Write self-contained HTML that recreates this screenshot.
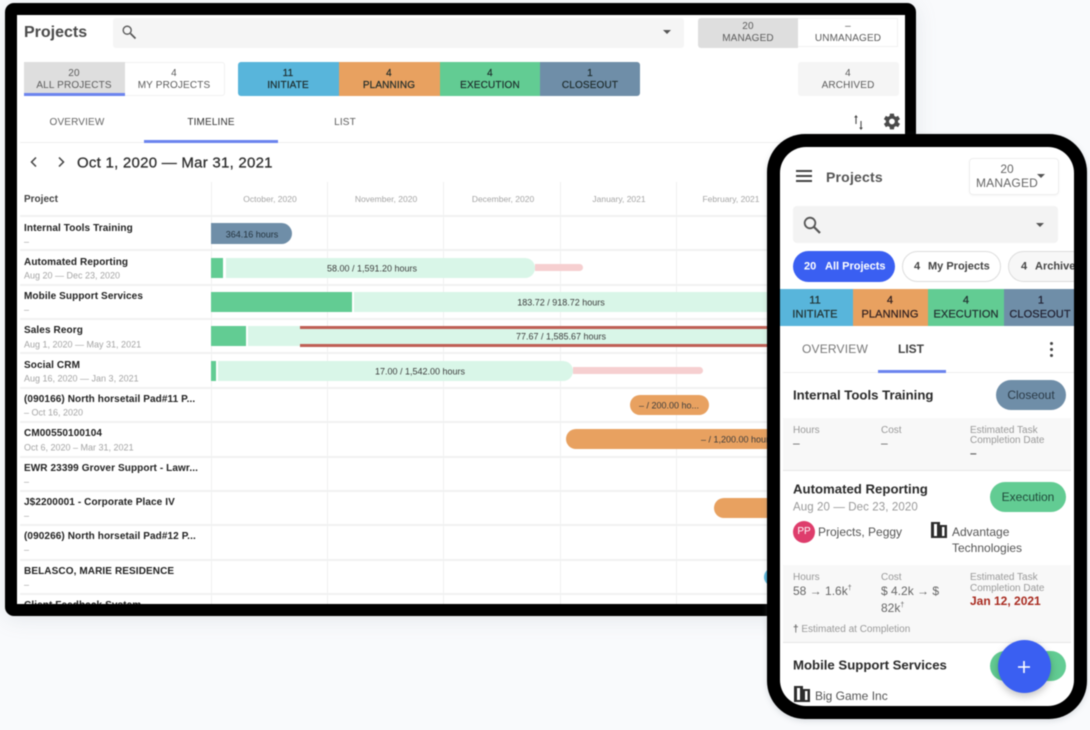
<!DOCTYPE html>
<html lang="en"><head><meta charset="utf-8"><title>Projects</title>
<style>
html,body{margin:0;padding:0;width:1090px;height:730px;overflow:hidden;background:#f9fafc;font-family:"Liberation Sans",sans-serif;color:#333}
#w{position:absolute;left:0;top:0;width:1090px;height:730px;filter:blur(.55px)}
.a{position:absolute}
.t{position:absolute;white-space:nowrap;transform:translateY(-50%);line-height:1}
.c{position:absolute;white-space:nowrap;transform:translate(-50%,-50%);line-height:1;text-align:center}
.tab .t,.tab .c{margin-top:1px}
.tab .t.b{margin-top:1.5px}
.lb{font-size:10px;color:#5c5c5c;letter-spacing:.15px}
.dk{color:#1d2b2b;-webkit-text-stroke:.2px #1d2b2b}
.b{font-size:10px;font-weight:bold;color:#222;letter-spacing:.1px}
.s{font-size:9px;color:#a5a5a5}
.m{font-size:8.500px;color:#a5a5a5}
.h{position:absolute;left:20px;width:885px;height:2px;background:#f1f2f2}
.v{position:absolute;top:182px;width:1px;height:422px;background:#efefef}
.bt{font-size:9px;color:#3c3c3c}
.pt{font-size:13.200px;font-weight:bold;color:#2a2a2a}
.g{font-size:10px;color:#999;margin-top:1px}
.v2{font-size:12px;color:#666}
.pill{position:absolute;border-radius:15px;height:30px}
.pn{font-size:11px;font-weight:bold;margin-top:1px}
.st{font-size:11px;letter-spacing:.1px;-webkit-text-stroke:.25px currentColor}
</style></head><body><div id="w">

<!-- tablet -->
<div class="a" style="left:5px;top:3px;width:911px;height:613px;background:#000;border-radius:9px;box-shadow:0 3px 22px rgba(120,135,150,.16)"></div>
<div class="a tab" style="left:17px;top:15px;width:888px;height:589px;background:#fff;overflow:hidden">
<div class="a" style="left:-17px;top:-15px;width:1090px;height:730px">

<div class="t" style="left:24px;top:32px;font-size:16px;font-weight:bold;color:#4a4a4a">Projects</div>
<div class="a" style="left:113px;top:18px;width:571px;height:30px;background:#f5f5f5;border-radius:3px"></div>
<svg class="a" style="left:121px;top:24px" width="16" height="16" viewBox="0 0 16 16"><circle cx="6.200" cy="6.200" r="4" fill="none" stroke="#555" stroke-width="1.300"/><path d="M9.500 9.500l5 5" stroke="#555" stroke-width="1.700"/></svg>
<div class="a" style="left:663px;top:30px;border:4px solid transparent;border-top:4px solid #555;border-bottom:0"></div>
<div class="a" style="left:698px;top:18px;width:100px;height:30px;background:#dedede;border-radius:3px 0 0 3px"></div>
<div class="a" style="left:798px;top:18px;width:100px;height:29px;background:#fff;border:1px solid #f1f1f1;border-left:0;box-sizing:border-box"></div>
<div class="c lb" style="left:748px;top:26px">20</div><div class="c lb" style="left:748px;top:38px">MANAGED</div>
<div class="c lb" style="left:848px;top:26px">–</div><div class="c lb" style="left:848px;top:38px">UNMANAGED</div>

<div class="a" style="left:24px;top:62px;width:201px;height:34px;border:1px solid #f1f1f1;border-radius:3px;box-sizing:border-box"></div>
<div class="a" style="left:24px;top:62px;width:101px;height:34px;background:#dedede;border-bottom:3px solid #6c84ee;box-sizing:border-box"></div>
<div class="c lb" style="left:74px;top:73px">20</div><div class="c lb" style="left:74px;top:85px">ALL PROJECTS</div>
<div class="c lb" style="left:174px;top:73px">4</div><div class="c lb" style="left:174px;top:85px">MY PROJECTS</div>

<div class="a" style="left:238px;top:62px;width:402px;height:34px;border-radius:3px;overflow:hidden">
<div class="a" style="left:0;top:0;width:101px;height:34px;background:#58b5db"></div>
<div class="a" style="left:101px;top:0;width:101px;height:34px;background:#e8a160"></div>
<div class="a" style="left:202px;top:0;width:100px;height:34px;background:#62cc93"></div>
<div class="a" style="left:302px;top:0;width:100px;height:34px;background:#6f8ea8"></div>
</div>
<div class="c lb dk" style="left:288px;top:73px">11</div><div class="c lb dk" style="left:288px;top:85px">INITIATE</div>
<div class="c lb dk" style="left:389px;top:73px">4</div><div class="c lb dk" style="left:389px;top:85px">PLANNING</div>
<div class="c lb dk" style="left:490px;top:73px">4</div><div class="c lb dk" style="left:490px;top:85px">EXECUTION</div>
<div class="c lb dk" style="left:590px;top:73px">1</div><div class="c lb dk" style="left:590px;top:85px">CLOSEOUT</div>

<div class="a" style="left:798px;top:62px;width:101px;height:34px;background:#f5f5f5;border-radius:3px"></div>
<div class="c lb" style="left:848px;top:73px">4</div><div class="c lb" style="left:848px;top:85px">ARCHIVED</div>

<div class="c lb" style="left:77px;top:122px;color:#666">OVERVIEW</div>
<div class="c lb" style="left:211px;top:122px;color:#333">TIMELINE</div>
<div class="c lb" style="left:345px;top:122px">LIST</div>
<div class="a" style="left:20px;top:142px;width:885px;height:1px;background:#eee"></div>
<div class="a" style="left:144px;top:140px;width:134px;height:3px;background:#6c84ee"></div>
<svg class="a" style="left:851px;top:113px" width="14" height="18" viewBox="0 0 14 18"><path d="M5 11V3" fill="none" stroke="#555" stroke-width="1.200"/><path d="M3.200 4.500L5 2l1.800 2.500z" fill="#444"/><path d="M10 8v8" fill="none" stroke="#555" stroke-width="1.200"/><path d="M8.200 14.500L10 17l1.800-2.500z" fill="#444"/></svg>
<svg class="a" style="left:881px;top:111px" width="21" height="21" viewBox="0 0 24 24"><path fill="#4a4a4a" fill-rule="evenodd" d="M19.400 13a7.800 7.800 0 0 0 0-2l2.300-1.700-2.200-3.700-2.600 1.100a7.600 7.600 0 0 0-1.700-1L14.800 3h-4.600l-.4 2.700a7.600 7.600 0 0 0-1.700 1L5.500 5.600 3.300 9.300 5.600 11a7.800 7.800 0 0 0 0 2l-2.300 1.700 2.200 3.700 2.600-1.100a7.600 7.600 0 0 0 1.700 1l.4 2.700h4.600l.4-2.700a7.600 7.600 0 0 0 1.700-1l2.600 1.100 2.200-3.700zM12.500 15.300a3.300 3.300 0 1 1 0-6.600 3.300 3.300 0 0 1 0 6.600z"/></svg>

<svg class="a" style="left:28px;top:156px" width="12" height="12" viewBox="0 0 12 12"><path d="M8 1.500L3.500 6 8 10.500" fill="none" stroke="#444" stroke-width="1.500"/></svg>
<svg class="a" style="left:55px;top:156px" width="12" height="12" viewBox="0 0 12 12"><path d="M4 1.500L8.500 6 4 10.500" fill="none" stroke="#444" stroke-width="1.500"/></svg>
<div class="t" style="left:77px;top:161.500px;font-size:15px;color:#2d2d2d;letter-spacing:.25px;-webkit-text-stroke:.25px #2d2d2d">Oct 1, 2020 — Mar 31, 2021</div>

<div class="t" style="left:24px;top:199px;font-size:10px;font-weight:bold;color:#444">Project</div>
<div class="c m" style="left:270px;top:198px">October, 2020</div>
<div class="c m" style="left:386px;top:198px">November, 2020</div>
<div class="c m" style="left:503px;top:198px">December, 2020</div>
<div class="c m" style="left:619px;top:198px">January, 2021</div>
<div class="c m" style="left:731px;top:198px">February, 2021</div>

<div class="v" style="left:211px"></div><div class="v" style="left:327px"></div><div class="v" style="left:443px"></div><div class="v" style="left:560px"></div><div class="v" style="left:676px"></div>

<div class="h" style="top:215px"></div><div class="h" style="top:249px"></div><div class="h" style="top:284px"></div><div class="h" style="top:318px"></div><div class="h" style="top:352px"></div><div class="h" style="top:387px"></div><div class="h" style="top:421px"></div><div class="h" style="top:456px"></div><div class="h" style="top:490px"></div><div class="h" style="top:524px"></div><div class="h" style="top:559px"></div><div class="h" style="top:593px"></div>

<div class="t b" style="left:24px;top:227px">Internal Tools Training</div><div class="t s" style="left:24px;top:241px">–</div>
<div class="t b" style="left:24px;top:261px">Automated Reporting</div><div class="t s" style="left:24px;top:275px">Aug 20 — Dec 23, 2020</div>
<div class="t b" style="left:24px;top:295px">Mobile Support Services</div><div class="t s" style="left:24px;top:309px">–</div>
<div class="t b" style="left:24px;top:329px">Sales Reorg</div><div class="t s" style="left:24px;top:344px">Aug 1, 2020 — May 31, 2021</div>
<div class="t b" style="left:24px;top:364px">Social CRM</div><div class="t s" style="left:24px;top:378px">Aug 16, 2020 — Jan 3, 2021</div>
<div class="t b" style="left:24px;top:398px">(090166) North horsetail Pad#11 P...</div><div class="t s" style="left:24px;top:412px">– Oct 16, 2020</div>
<div class="t b" style="left:24px;top:432px">CM00550100104</div><div class="t s" style="left:24px;top:447px">Oct 6, 2020 – Mar 31, 2021</div>
<div class="t b" style="left:24px;top:467px">EWR 23399 Grover Support - Lawr...</div><div class="t s" style="left:24px;top:481px">–</div>
<div class="t b" style="left:24px;top:501px">J$2200001 - Corporate Place IV</div><div class="t s" style="left:24px;top:515px">–</div>
<div class="t b" style="left:24px;top:535px">(090266) North horsetail Pad#12 P...</div><div class="t s" style="left:24px;top:549px">–</div>
<div class="t b" style="left:24px;top:570px">BELASCO, MARIE RESIDENCE</div><div class="t s" style="left:24px;top:584px">–</div>
<div class="t b" style="left:24px;top:604px">Client Feedback System</div>

<!-- bars -->
<div class="a" style="left:211px;top:223px;width:81px;height:21px;background:#6f8ea8;border-radius:0 11px 11px 0"></div>
<div class="c bt" style="left:252px;top:234px;color:#24343f">364.16 hours</div>

<div class="a" style="left:535px;top:264px;width:48px;height:7px;background:#f6cfd0;border-radius:0 4px 4px 0"></div>
<div class="a" style="left:226px;top:258px;width:309px;height:20px;background:#d9f6e8;border-radius:0 10px 10px 0"></div>
<div class="a" style="left:211px;top:258px;width:12px;height:20px;background:#62cc93"></div>
<div class="c bt" style="left:372px;top:268px">58.00 / 1,591.20 hours</div>

<div class="a" style="left:354px;top:292px;width:420px;height:20px;background:#d9f6e8"></div>
<div class="a" style="left:211px;top:292px;width:141px;height:20px;background:#62cc93"></div>
<div class="c bt" style="left:561px;top:302px">183.72 / 918.72 hours</div>

<div class="a" style="left:248px;top:326px;width:526px;height:20px;background:#d9f6e8"></div>
<div class="a" style="left:211px;top:326px;width:35px;height:20px;background:#62cc93"></div>
<div class="a" style="left:300px;top:326px;width:474px;height:2.500px;background:#bf5f55"></div>
<div class="a" style="left:300px;top:344px;width:474px;height:3px;background:#bf5f55"></div>
<div class="c bt" style="left:561px;top:336px">77.67 / 1,585.67 hours</div>

<div class="a" style="left:573px;top:367px;width:130px;height:7px;background:#f6cfd0;border-radius:0 4px 4px 0"></div>
<div class="a" style="left:218px;top:361px;width:355px;height:20px;background:#d9f6e8;border-radius:0 10px 10px 0"></div>
<div class="a" style="left:211px;top:361px;width:5px;height:20px;background:#62cc93"></div>
<div class="c bt" style="left:420px;top:371px">17.00 / 1,542.00 hours</div>

<div class="a" style="left:630px;top:395px;width:79px;height:20px;background:#e8a160;border-radius:10px"></div>
<div class="c bt" style="left:669px;top:405px">– / 200.00 ho...</div>
<div class="a" style="left:566px;top:429px;width:210px;height:20px;background:#e8a160;border-radius:10px 0 0 10px"></div>
<div class="t bt" style="left:701px;top:439px">– / 1,200.00 hours</div>
<div class="a" style="left:714px;top:498px;width:62px;height:20px;background:#e8a160;border-radius:10px 0 0 10px"></div>
<div class="a" style="left:764px;top:568px;width:14px;height:18px;background:#58b5db;border-radius:9px 0 0 9px"></div>
</div></div>

<!-- phone -->
<div class="a" style="left:767px;top:134px;width:320px;height:585px;background:#000;border-radius:38px;box-shadow:0 2px 6px rgba(120,130,140,.25)"></div>
<div class="a" style="left:780px;top:147px;width:294px;height:559px;background:#fff;border-radius:26px;overflow:hidden">
<div class="a" style="left:-780px;top:-147px;width:1090px;height:730px">

<svg class="a" style="left:795px;top:169px" width="18" height="14" viewBox="0 0 18 14"><path d="M1 2h16M1 7h16M1 12h16" stroke="#444" stroke-width="2"/></svg>
<div class="t" style="left:826px;top:177px;font-size:14px;font-weight:bold;color:#555;letter-spacing:.2px">Projects</div>
<div class="a" style="left:969px;top:158px;width:90px;height:37px;border:1px solid #eee;border-radius:4px;box-sizing:border-box;box-shadow:0 1px 2px rgba(0,0,0,.04)"></div>
<div class="c" style="left:1007px;top:169px;font-size:12px;color:#666">20</div>
<div class="c" style="left:1007px;top:183px;font-size:12px;color:#666;letter-spacing:.2px">MANAGED</div>
<div class="a" style="left:1037px;top:174px;border:4px solid transparent;border-top:4px solid #555;border-bottom:0"></div>

<div class="a" style="left:793px;top:206px;width:265px;height:37px;background:#f3f3f3;border-radius:4px"></div>
<svg class="a" style="left:802px;top:215px" width="19" height="19" viewBox="0 0 19 19"><circle cx="8" cy="8" r="5.300" fill="none" stroke="#555" stroke-width="1.800"/><path d="M12 12l6 6" stroke="#555" stroke-width="2.200"/></svg>
<div class="a" style="left:1036px;top:223px;border:4px solid transparent;border-top:4px solid #555;border-bottom:0"></div>

<div class="a" style="left:793px;top:251px;width:102px;height:31px;background:#3a5ff2;border-radius:16px"></div>
<div class="t pn" style="left:804px;top:266px;color:#fff">20</div><div class="t pn" style="left:825px;top:266px;color:#fff">All Projects</div>
<div class="a" style="left:902px;top:251px;width:99px;height:31px;border:1.500px solid #ddd;border-radius:16px;box-sizing:border-box"></div>
<div class="t pn" style="left:914px;top:266px;color:#444">4</div><div class="t pn" style="left:928px;top:266px;color:#444">My Projects</div>
<div class="a" style="left:1008px;top:251px;width:99px;height:31px;border:1.500px solid #ddd;border-radius:16px;box-sizing:border-box;background:#f7f7f7"></div>
<div class="t pn" style="left:1021px;top:266px;color:#444">4</div><div class="t pn" style="left:1035px;top:266px;color:#444">Archived</div>

<div class="a" style="left:780px;top:289px;width:73px;height:37px;background:#58b5db"></div>
<div class="a" style="left:853px;top:289px;width:75px;height:37px;background:#e8a160"></div>
<div class="a" style="left:928px;top:289px;width:76px;height:37px;background:#62cc93"></div>
<div class="a" style="left:1004px;top:289px;width:70px;height:37px;background:#6f8ea8"></div>
<div class="c st" style="left:815px;top:301px;color:#233">11</div><div class="c st" style="left:815px;top:315px;color:#233">INITIATE</div>
<div class="c st" style="left:890px;top:301px;color:#322">4</div><div class="c st" style="left:890px;top:315px;color:#322">PLANNING</div>
<div class="c st" style="left:966px;top:301px;color:#233">4</div><div class="c st" style="left:966px;top:315px;color:#233">EXECUTION</div>
<div class="c st" style="left:1041px;top:301px;color:#223">1</div><div class="c st" style="left:1040px;top:315px;color:#223">CLOSEOUT</div>

<div class="c" style="left:835px;top:349px;font-size:12px;color:#777;letter-spacing:.2px">OVERVIEW</div>
<div class="c" style="left:911px;top:349px;font-size:12px;color:#444;font-weight:bold">LIST</div>
<div class="a" style="left:1049.500px;top:342px;width:3px;height:3px;background:#444;border-radius:50%;box-shadow:0 6px 0 #444,0 12px 0 #444"></div>
<div class="a" style="left:783px;top:372px;width:291px;height:1px;background:#eee"></div>
<div class="a" style="left:878px;top:370px;width:68px;height:3px;background:#6c84ee"></div>

<div class="t pt" style="left:793px;top:395px">Internal Tools Training</div>
<div class="pill" style="left:996px;top:380px;width:70px;background:#6f8ea8"></div>
<div class="c" style="left:1031px;top:395px;font-size:12px;color:#2b3b48">Closeout</div>

<div class="a" style="left:783px;top:418px;width:288px;height:53px;background:#f8f8f8"></div>
<div class="t g" style="left:793px;top:430px">Hours</div><div class="t v2" style="left:793px;top:443px">–</div>
<div class="t g" style="left:881px;top:430px">Cost</div><div class="t v2" style="left:881px;top:443px">–</div>
<div class="t g" style="left:970px;top:430px">Estimated Task</div><div class="t g" style="left:970px;top:440px">Completion Date</div><div class="t v2" style="left:970px;top:453px;font-weight:bold">–</div>
<div class="a" style="left:783px;top:470px;width:288px;height:1px;background:#e6e6e6"></div>

<div class="t pt" style="left:793px;top:489px">Automated Reporting</div>
<div class="t" style="left:793px;top:508px;font-size:11.500px;color:#999;letter-spacing:.1px">Aug 20 — Dec 23, 2020</div>
<div class="pill" style="left:990px;top:482px;width:76px;background:#62cc93"></div>
<div class="c" style="left:1028px;top:497px;font-size:12px;color:#1f4a3a">Execution</div>
<div class="a" style="left:793px;top:521px;width:22px;height:22px;background:#de3d6c;border-radius:50%"></div>
<div class="c" style="left:804px;top:532px;font-size:10px;color:#fff">PP</div>
<div class="t" style="left:818px;top:532px;font-size:12px;color:#555">Projects, Peggy</div>
<svg class="a" style="left:931px;top:522px" width="16" height="16" viewBox="0 0 16 16"><path fill="#2c2c2c" fill-rule="evenodd" d="M0 0h9v3h7v13H0zM3 2v12h3V2zM11 5v9h2.500V5z"/></svg>
<div class="t" style="left:952px;top:532px;font-size:12px;color:#555">Advantage</div>
<div class="t" style="left:952px;top:548px;font-size:12px;color:#555">Technologies</div>

<div class="a" style="left:783px;top:565px;width:288px;height:77px;background:#f8f8f8"></div>
<div class="t g" style="left:793px;top:577px">Hours</div><div class="t v2" style="left:793px;top:591px">58 → 1.6k<sup style="font-size:7px">†</sup></div>
<div class="t g" style="left:881px;top:577px">Cost</div><div class="t v2" style="left:881px;top:591px">$ 4.2k → $</div><div class="t v2" style="left:881px;top:608px">82k<sup style="font-size:7px">†</sup></div>
<div class="t g" style="left:970px;top:577px">Estimated Task</div><div class="t g" style="left:970px;top:588px">Completion Date</div>
<div class="t" style="left:970px;top:601px;font-size:12px;font-weight:bold;color:#a82a1f">Jan 12, 2021</div>
<div class="t g" style="left:793px;top:629px"><b style="color:#666">†</b> Estimated at Completion</div>
<div class="a" style="left:783px;top:642px;width:288px;height:1px;background:#e6e6e6"></div>

<div class="t pt" style="left:793px;top:665px">Mobile Support Services</div>
<div class="pill" style="left:990px;top:651px;width:76px;background:#62cc93"></div>
<svg class="a" style="left:794px;top:686px" width="16" height="16" viewBox="0 0 16 16"><path fill="#2c2c2c" fill-rule="evenodd" d="M0 0h9v3h7v13H0zM3 2v12h3V2zM11 5v9h2.500V5z"/></svg>
<div class="t" style="left:815px;top:696px;font-size:12px;color:#555">Big Game Inc</div>
</div></div>
<div class="a" style="left:998px;top:640px;width:53px;height:53px;background:#3a5ff2;border-radius:50%;box-shadow:0 3px 8px rgba(0,0,0,.25)"></div>
<svg class="a" style="left:1017px;top:660px" width="14" height="14" viewBox="0 0 14 14"><path d="M7 1v12M1 7h12" stroke="#fff" stroke-width="1.600"/></svg>
</div></body></html>
